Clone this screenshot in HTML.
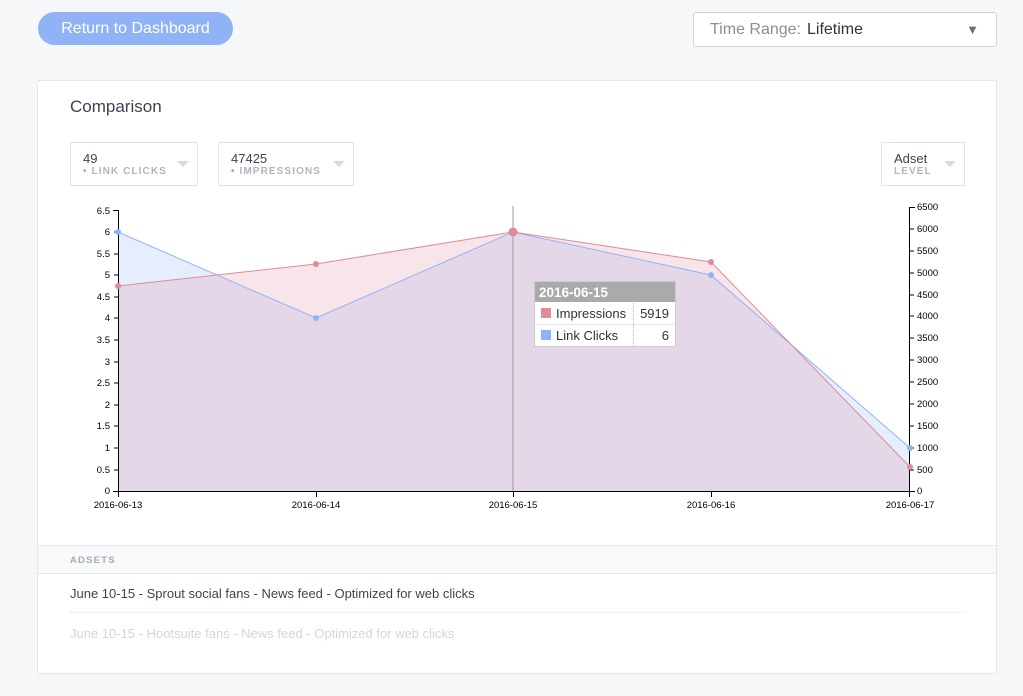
<!DOCTYPE html>
<html><head><meta charset="utf-8"><style>
*{box-sizing:border-box;margin:0;padding:0}
body{width:1023px;height:696px;background:#f6f7f9;font-family:"Liberation Sans",sans-serif;position:relative;overflow:hidden;color:#3d4450}
.btn{position:absolute;left:38px;top:12px;width:195px;height:33px;border-radius:17px;background:#8fb3f6;color:#fff;font-size:16px;line-height:33px;text-align:center}
.tr{position:absolute;left:693px;top:12px;width:304px;height:35px;border:1px solid #cfd3d8;border-radius:3px;background:#fff;font-size:16px;line-height:33px;padding-left:16px;color:#8a8f96}
.tr b{font-weight:normal;color:#2f3540;margin-left:6px}
.tr i{position:absolute;right:17px;top:0;font-style:normal;font-size:13px;color:#6b7079}
.card{position:absolute;left:37px;top:80px;width:960px;height:594px;background:#fff;border:1px solid #e3e6ea;border-top:1px dotted #ccd;border-radius:2px}
h2{position:absolute;left:32px;top:16px;font-size:17px;font-weight:normal;color:#3d4450}
.f{position:absolute;top:61px;height:44px;border:1px solid #dde3e8;border-radius:2px;padding:8px 12px;font-size:13px;color:#3d4450}
.f small{display:block;font-size:10px;font-weight:bold;letter-spacing:1.1px;color:#b0b6bc;margin-top:0px}
.f .c{position:absolute;right:8px;top:18px;width:0;height:0;border-left:6px solid transparent;border-right:6px solid transparent;border-top:6px solid #d4dde3}
.ad{position:absolute;left:0;top:464px;width:958px;height:29px;background:#f7f9fb;border-top:1px solid #e3e8ec;border-bottom:1px solid #e3e8ec;font-size:9.5px;font-weight:bold;letter-spacing:1.2px;color:#a7adb3;padding:9px 32px}
.r{position:absolute;left:32px;width:894px;font-size:13px}
</style></head><body>
<div class="btn">Return to Dashboard</div>
<div class="tr">Time Range:<b>Lifetime</b><i>▼</i></div>
<div class="card">
<h2>Comparison</h2>
<div class="f" style="left:32px;width:128px">49<small><span style="color:#8fb3f6">•</span> LINK CLICKS</small><span class="c"></span></div>
<div class="f" style="left:180px;width:136px">47425<small><span style="color:#e08a9a">•</span> IMPRESSIONS</small><span class="c"></span></div>
<div class="f" style="left:843px;width:84px">Adset<small>LEVEL</small><span class="c"></span></div>
<div class="ad">ADSETS</div>
<div class="r" style="top:505px;color:#3d4450;height:27px;border-bottom:1px dotted #e3e6ea">June 10-15 - Sprout social fans - News feed - Optimized for web clicks</div>
<div class="r" style="top:545px;color:#d3d6da">June 10-15 - Hootsuite fans - News feed - Optimized for web clicks</div>
</div>
<svg style="position:absolute;left:0;top:0" width="1023" height="696" font-family="Liberation Sans,sans-serif" font-size="9.5">
<polygon points="118,232 316,318 513,232 711,275 910,448 910,491 118,491" fill="#8fb3f6" fill-opacity="0.22"/>
<polygon points="118,286 316,264 513,232 711,262 910,467 910,491 118,491" fill="#e08a9a" fill-opacity="0.22"/>
<polyline points="118,232 316,318 513,232 711,275 910,448" fill="none" stroke="#8fb3f6" stroke-width="1"/>
<polyline points="118,286 316,264 513,232 711,262 910,467" fill="none" stroke="#e08a9a" stroke-width="1"/>
<line x1="513" y1="206" x2="513" y2="491" stroke="#999" stroke-width="1"/>
<g stroke="#000" stroke-width="1" fill="none">
<path d="M113,210.5H118.5V491.5H113"/><path d="M915,207.5H909.5V491.5H915"/><path d="M118,491.5H910"/>
<path d="M118.5,491V497M316.5,491V497M513.5,491V497M711.5,491V497M909.5,491V497"/>
</g>
<g stroke="#000">
<path d="M114,232H118M114,254H118M114,275H118M114,297H118M114,318H118M114,340H118M114,362H118M114,383H118M114,405H118M114,426H118M114,448H118M114,470H118"/>
<path d="M910,229H914M910,251H914M910,273H914M910,295H914M910,316H914M910,338H914M910,360H914M910,382H914M910,404H914M910,426H914M910,448H914M910,470H914"/>
</g>
<g fill="#8fb3f6"><circle cx="118" cy="232" r="3"/><circle cx="316" cy="318" r="3"/><circle cx="711" cy="275" r="3"/><circle cx="910" cy="448" r="3"/></g>
<g fill="#e08a9a"><circle cx="118" cy="286" r="3"/><circle cx="316" cy="264" r="3"/><circle cx="513" cy="232" r="4.5"/><circle cx="711" cy="262" r="3"/><circle cx="910" cy="467" r="3"/></g>
<g text-anchor="end" fill="#000">
<text x="110" y="214">6.5</text><text x="110" y="235">6</text><text x="110" y="257">5.5</text><text x="110" y="278">5</text><text x="110" y="300">4.5</text><text x="110" y="321">4</text><text x="110" y="343">3.5</text><text x="110" y="365">3</text><text x="110" y="386">2.5</text><text x="110" y="408">2</text><text x="110" y="429">1.5</text><text x="110" y="451">1</text><text x="110" y="473">0.5</text><text x="110" y="494">0</text>
</g>
<g fill="#000">
<text x="917" y="210">6500</text><text x="917" y="232">6000</text><text x="917" y="254">5500</text><text x="917" y="276">5000</text><text x="917" y="298">4500</text><text x="917" y="319">4000</text><text x="917" y="341">3500</text><text x="917" y="363">3000</text><text x="917" y="385">2500</text><text x="917" y="407">2000</text><text x="917" y="429">1500</text><text x="917" y="451">1000</text><text x="917" y="473">500</text><text x="917" y="494">0</text>
</g>
<g text-anchor="middle" fill="#000">
<text x="118" y="508">2016-06-13</text><text x="316" y="508">2016-06-14</text><text x="513" y="508">2016-06-15</text><text x="711" y="508">2016-06-16</text><text x="910" y="508">2016-06-17</text>
</g>
<g>
<rect x="534.5" y="281.5" width="141" height="65" fill="#fff" stroke="#ccc"/>
<rect x="535" y="282" width="140" height="20" fill="#aaaaaa"/>
<text x="539" y="297" fill="#fff" font-size="13.5" font-weight="bold">2016-06-15</text>
<line x1="535" y1="324.5" x2="675" y2="324.5" stroke="#e6e6e6"/>
<line x1="633.5" y1="303" x2="633.5" y2="346" stroke="#bbb" stroke-dasharray="1,1"/>
<rect x="541" y="308" width="10" height="10" fill="#e08a9a"/>
<rect x="541" y="330" width="10" height="10" fill="#8fb3f6"/>
<text x="556" y="318" font-size="13" fill="#333">Impressions</text>
<text x="556" y="340" font-size="13" fill="#333">Link Clicks</text>
<text x="669" y="318" font-size="13" fill="#333" text-anchor="end">5919</text>
<text x="669" y="340" font-size="13" fill="#333" text-anchor="end">6</text>
</g>
</svg>
</body></html>
